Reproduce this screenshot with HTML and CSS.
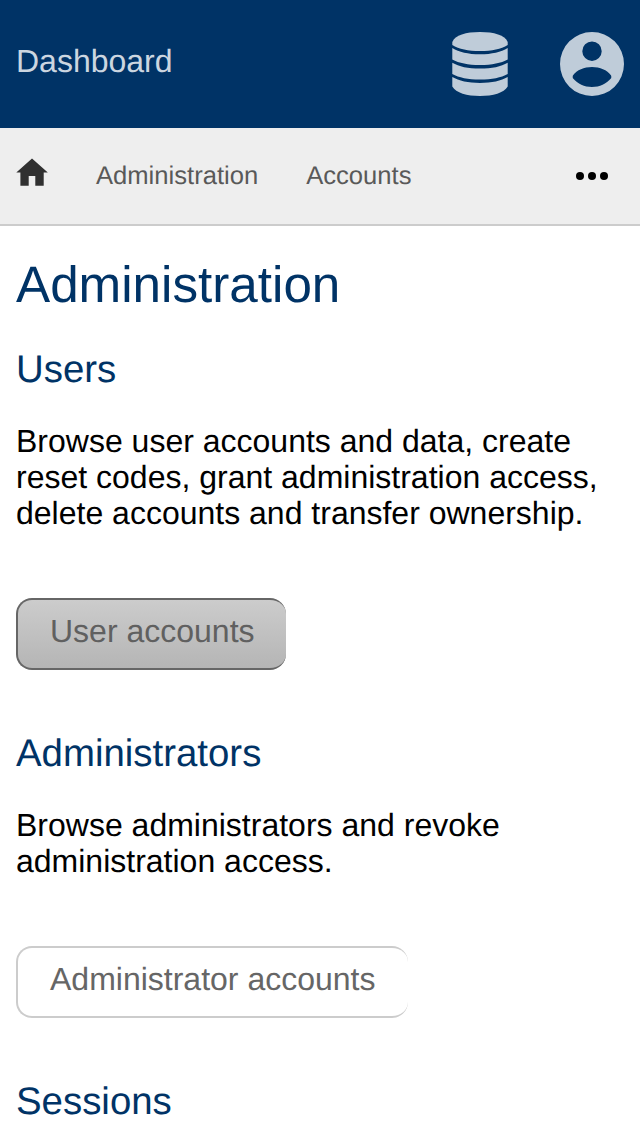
FILE: index.html
```html
<!DOCTYPE html>
<html lang="en">
<head>
<meta charset="utf-8">
<title>Administration</title>
<link rel="stylesheet" href="styles.css">
</head>
<body>
<header class="topbar">
  <span class="brand">Dashboard</span>
  <nav class="tools">
    <svg class="icon-db" viewBox="0 0 56 64" aria-label="Data">
      <path d="M0.3 10C3 3 14 0 28 0S53 3 55.7 10V13C49 17 40 19 28 19S7 17 0.3 13Z"/>
      <path d="M0.3 16C7 20 16 22.3 28 22.3S49 20 55.7 16V27.600C49 31.200 40 33.100 28 33.100S7 31.200 0.3 27.600Z"/>
      <path d="M0.3 30.700C7 34.600 16 36.600 28 36.600S49 34.600 55.700 30.700V42C49 45.700 40 47.500 28 47.500S7 45.700 0.3 42Z"/>
      <path d="M0.3 45.100C7 49 16 51 28 51S49 49 55.700 45.100V54.500C52 61 41 64 28 64S4 61 0.3 54.500Z"/>
    </svg>
    <svg class="icon-user" viewBox="0 0 64 64" aria-label="Account">
      <path fill-rule="evenodd" d="M32 0a32 32 0 1 0 0 64a32 32 0 1 0 0-64ZM32 9.500a9.700 9.700 0 1 1 0 19.400a9.700 9.700 0 1 1 0-19.400ZM12.900 43.500C17 37.700 24 34.900 32 34.900S47 37.700 51.100 43.500Q51.600 45 51.100 46.300C46 52 40 55 32 55S18 52 12.900 46.300Q12.400 45 12.900 43.500Z"/>
    </svg>
  </nav>
</header>
<nav class="crumbs">
  <svg class="icon-home" viewBox="0 0 32 28" aria-label="Home">
    <path d="M16 0.500L31.800 14.600H27.700V27.700H19.300V18H12.700V27.700H4.400V14.600H0.300Z"/>
  </svg>
  <span class="crumb">Administration</span>
  <span class="crumb">Accounts</span>
  <svg class="icon-more" viewBox="0 0 32 8" aria-label="More">
    <circle cx="4" cy="4" r="4"/><circle cx="16" cy="4" r="4"/><circle cx="28" cy="4" r="4"/>
  </svg>
</nav>
<main class="content">
  <h1 class="title">Administration</h1>
  <section class="block">
    <h2 class="subtitle">Users</h2>
    <p class="text">Browse user accounts and data, create reset codes, grant administration access, delete accounts and transfer ownership.</p>
    <a class="button button-active">User accounts</a>
  </section>
  <section class="block">
    <h2 class="subtitle">Administrators</h2>
    <p class="text">Browse administrators and revoke administration access.</p>
    <a class="button button-wide">Administrator accounts</a>
  </section>
  <section class="block">
    <h2 class="subtitle">Sessions</h2>
  </section>
</main>
</body>
</html>
```

FILE: styles.css
```css
* {
  box-sizing: border-box;
}

body {
  margin: 0;
  height: 1136px;
  overflow: hidden;
  background: #fff;
  color: #000;
  font: 32px/36px "Liberation Sans", Arial, sans-serif;
  text-rendering: geometricPrecision;
}

.topbar {
  display: flex;
  align-items: center;
  justify-content: space-between;
  height: 128px;
  padding: 0 16px;
  background: #003366;
}

.brand {
  padding-bottom: 6px;
  color: #ccd6e0;
}

.tools {
  display: flex;
  gap: 52px;
  fill: #bfccd9;
}

.icon-db {
  width: 56px;
  height: 64px;
}

.icon-user {
  width: 64px;
  height: 64px;
}

.crumbs {
  display: flex;
  align-items: center;
  height: 98px;
  padding: 0 32px 0 16px;
  background: #eee;
  border-bottom: 2px solid #ccc;
  color: #595959;
  font-size: 25.6px;
  line-height: 30px;
}

.icon-home {
  width: 32px;
  height: 28px;
  margin-bottom: 8px;
  fill: #303030;
}

.crumb {
  margin-left: 48px;
  padding-bottom: 1px;
}

.icon-more {
  width: 32px;
  height: 8px;
  margin-left: auto;
}

.content {
  padding: 30px 16px 0;
}

.title {
  margin: 0 0 34px;
  color: #003366;
  font-size: 51.2px;
  font-weight: 400;
  line-height: 58px;
}

.block {
  margin-bottom: 62px;
}

.subtitle {
  margin: 0 0 31px;
  color: #003366;
  font-size: 38.4px;
  font-weight: 400;
  line-height: 44px;
}

.text {
  margin: 0 0 67px;
}

.button {
  display: block;
  width: 270px;
  height: 72px;
  padding: 13px 0 0 32px;
  border: 2px solid #ccc;
  border-right-width: 0;
  border-radius: 16px;
  color: #666;
  white-space: nowrap;
}

.button-wide {
  width: 392px;
}

.button-active {
  border-color: #666;
  background: linear-gradient(#ccc, #b5b5b5);
  color: #606060;
}
```
